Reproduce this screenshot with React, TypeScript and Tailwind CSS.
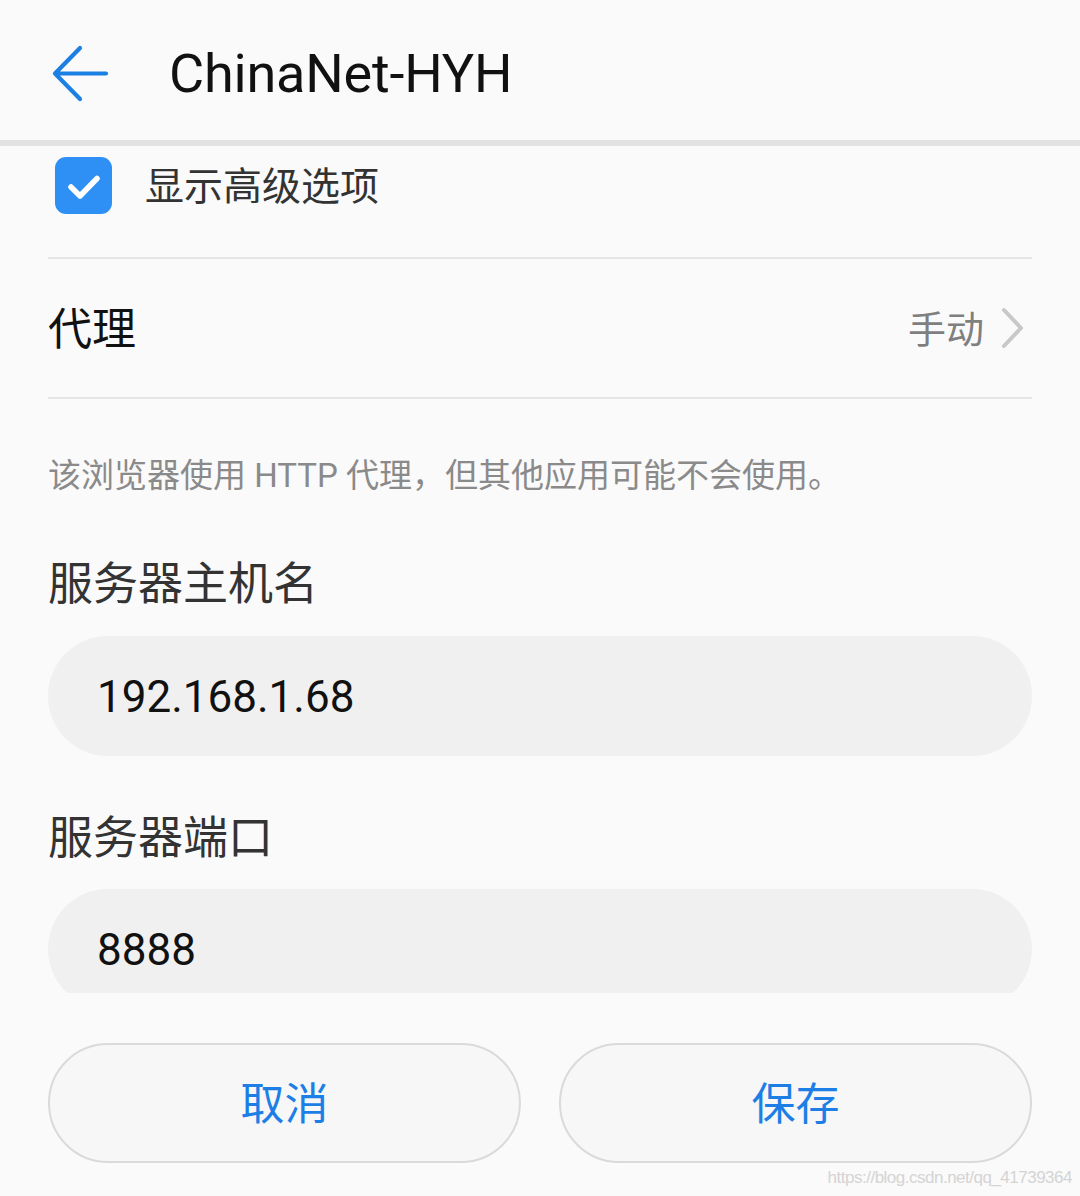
import React from "react";

const cjk = "font-['Roboto','Noto_Sans_CJK_SC',sans-serif]";

function BackArrow() {
  return (
    <svg width="60" height="60" viewBox="0 0 60 60" className="shrink-0">
      <path
        d="M55 29.5 H4 M29 4 L4 29.5 L29 55"
        fill="none"
        stroke="#1c7fe4"
        strokeWidth="4.2"
        strokeLinecap="round"
        strokeLinejoin="round"
      />
    </svg>
  );
}

function Chevron() {
  return (
    <svg width="26" height="42" viewBox="0 0 26 42" className="shrink-0">
      <path
        d="M4 3 L21 21 L4 39"
        fill="none"
        stroke="#c8c8c8"
        strokeWidth="4"
        strokeLinecap="round"
        strokeLinejoin="round"
      />
    </svg>
  );
}

function Checkbox() {
  return (
    <div className="w-[57px] h-[57px] rounded-[11px] bg-[#2e8ff5] flex items-center justify-center shrink-0">
      <svg width="40" height="40" viewBox="0 0 40 40">
        <path
          d="M7 21 L16 30 L33 12.5"
          fill="none"
          stroke="#ffffff"
          strokeWidth="5.5"
          strokeLinecap="round"
          strokeLinejoin="round"
        />
      </svg>
    </div>
  );
}

export default function App() {
  return (
    <div className={`w-[1080px] h-[1196px] bg-[#fafafa] flex flex-col overflow-hidden ${cjk}`}>
      {/* Header */}
      <div className="h-[140px] flex items-center pl-[51px] pt-[7px] shrink-0">
        <BackArrow />
        <div className="ml-[58px] text-[54px] leading-none text-[#111111] font-['Roboto',sans-serif] tracking-[-0.2px]">
          ChinaNet-HYH
        </div>
      </div>
      <div className="h-[6px] bg-[#e2e2e2] shrink-0" />

      {/* Scroll region */}
      <div className="h-[847px] overflow-hidden px-[48px] shrink-0">
        <div className="h-[111px] pt-[11px] pl-[7px]">
          <div className="flex items-center h-[57px] gap-[33px]">
            <Checkbox />
            <span className="text-[39px] leading-none text-[#333333] pt-[3px]">显示高级选项</span>
          </div>
        </div>
        <div className="h-[2px] bg-[#e6e6e6]" />
        <div className="h-[138px] flex items-center justify-between">
          <span className="text-[44px] leading-none text-[#111111] pt-[4px]">代理</span>
          <div className="flex items-center gap-[16px] pr-[6px]">
            <span className="text-[38px] leading-none text-[#7f7f7f] pt-[3px]">手动</span>
            <Chevron />
          </div>
        </div>
        <div className="h-[2px] bg-[#e6e6e6]" />
        <div className="h-[150px] flex items-center">
          <span className="text-[33px] leading-none text-[#8a8a8a] pt-[2px]">
            该浏览器使用 HTTP 代理，但其他应用可能不会使用。
          </span>
        </div>
        <div className="h-[68px] flex items-center">
          <span className="text-[45px] leading-none text-[#333333] pt-[2px]">服务器主机名</span>
        </div>
        <div className="mt-[19px] h-[120px] rounded-full bg-[#f0f0f0] flex items-center pl-[49px]">
          <span className="text-[44px] leading-none text-[#111111] font-['Roboto',sans-serif] pt-[2px]">192.168.1.68</span>
        </div>
        <div className="mt-[47px] h-[68px] flex items-center">
          <span className="text-[45px] leading-none text-[#333333] pt-[2px]">服务器端口</span>
        </div>
        <div className="mt-[18px] h-[120px] rounded-full bg-[#f0f0f0] flex items-center pl-[49px]">
          <span className="text-[44px] leading-none text-[#111111] font-['Roboto',sans-serif] pt-[2px]">8888</span>
        </div>
      </div>

      {/* Footer */}
      <div className="flex-1 flex flex-col px-[48px] pt-[50px]">
        <div className="flex gap-[38px]">
          <button className="flex-1 h-[120px] rounded-full border-2 border-[#dadada] bg-[#f7f7f7] flex items-center justify-center text-[44px] leading-none text-[#1d7fe6] pt-[3px]">
            取消
          </button>
          <button className="flex-1 h-[120px] rounded-full border-2 border-[#dadada] bg-[#f7f7f7] flex items-center justify-center text-[44px] leading-none text-[#1d7fe6] pt-[3px]">
            保存
          </button>
        </div>
        <div className="flex justify-end -mr-[40px] mt-[6px]">
          <span className="text-[17px] leading-none text-[#d4d4d4] font-['Liberation_Sans',sans-serif] tracking-[-0.5px]">
            https://blog.csdn.net/qq_41739364
          </span>
        </div>
      </div>
    </div>
  );
}
